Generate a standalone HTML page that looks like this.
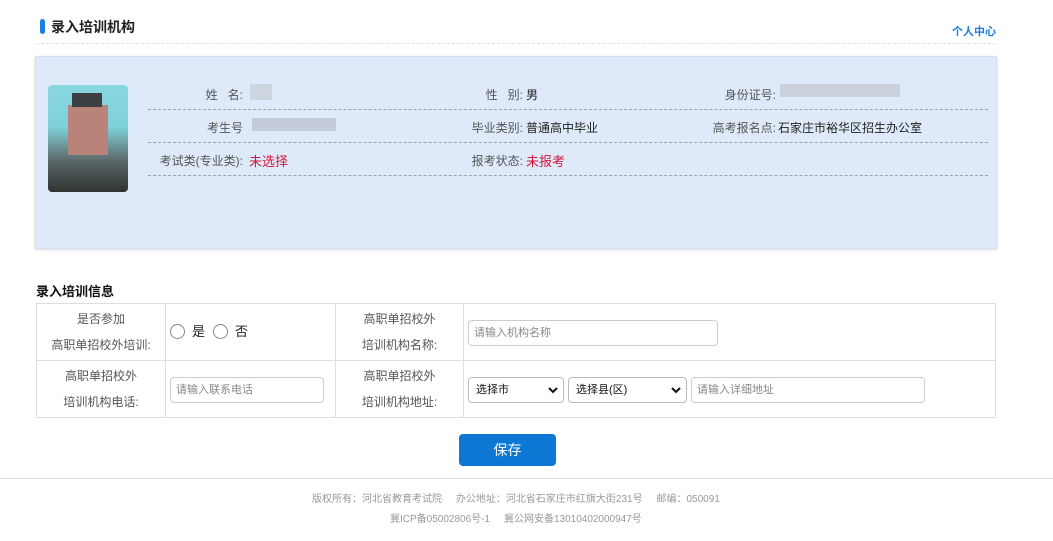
<!DOCTYPE html>
<html><head><meta charset="utf-8"><style>
*{margin:0;padding:0;box-sizing:border-box}
body{width:1053px;height:541px;background:#fff;font-family:"Liberation Sans","Noto Sans CJK SC",sans-serif;font-size:12px;color:#333;position:relative;overflow:hidden}
.a{position:absolute;white-space:nowrap}
.dash{position:absolute;left:148px;width:840px;border-top:1px dashed #9aa3ad}
.lab{color:#555;text-align:right}
.red{color:#d4163c}
.inp{position:absolute;border:1px solid #ccc;border-radius:4px;background:#fff;color:#888;font-size:11px;padding-left:5px;line-height:24px;height:26px;text-align:left}
.sel{position:absolute;border:1px solid #bbb;border-radius:4px;background:#fff;color:#111;font-size:11px;padding-left:7px;line-height:24px;height:26px;text-align:left}
.sel svg{position:absolute;right:5px;top:9px}
td{border:1px solid #ddd;color:#555;font-size:12px;text-align:center;line-height:26px;position:relative}
</style></head><body>
<div class="a" style="left:40px;top:19px;width:5px;height:15px;background:#1d7fe0;border-radius:3px"></div>
<div class="a" style="left:51px;top:17px;font-size:14px;font-weight:bold;color:#222">录入培训机构</div>
<div class="a" style="left:952px;top:23px;font-size:11px;color:#1d7fe0;font-weight:bold">个人中心</div>
<div class="a" style="left:36px;top:43px;width:960px;border-top:1px dashed #e3e3e3"></div>

<div class="a" style="left:35px;top:56px;width:962px;height:193px;background:#deeafa;border:1px solid #d2dff0;box-shadow:0 1px 3px rgba(0,0,0,.15)"></div>
<div class="a" style="left:48px;top:85px;width:80px;height:107px;border-radius:4px;background:linear-gradient(180deg,#8ad8e0 0%,#7ed0da 40%,#5d6a6a 70%,#2e3433 100%);overflow:hidden">
<div style="position:absolute;left:20px;top:20px;width:40px;height:50px;background:#b9837a"></div>
<div style="position:absolute;left:24px;top:8px;width:30px;height:14px;background:#3d4043"></div>
</div>
<div class="a" style="left:250px;top:84px;width:22px;height:16px;background:#c6ccd6;opacity:.7"></div>
<div class="a" style="left:252px;top:118px;width:84px;height:13px;background:#bcc4cf;opacity:.8"></div>
<div class="a" style="left:780px;top:84px;width:120px;height:13px;background:#c6ccd6;opacity:.8"></div>

<div class="a lab" style="left:150px;top:86px;width:93px">姓&nbsp;&nbsp;&nbsp;名:</div>
<div class="a lab" style="left:430px;top:86px;width:93px">性&nbsp;&nbsp;&nbsp;别:</div>
<div class="a" style="left:526px;top:86px;color:#222">男</div>
<div class="a lab" style="left:680px;top:86px;width:96px">身份证号:</div>
<div class="dash" style="top:109px"></div>
<div class="a lab" style="left:150px;top:119px;width:93px">考生号</div>
<div class="a lab" style="left:430px;top:119px;width:93px">毕业类别:</div>
<div class="a" style="left:526px;top:119px;color:#222">普通高中毕业</div>
<div class="a lab" style="left:680px;top:119px;width:96px">高考报名点:</div>
<div class="a" style="left:778px;top:119px;color:#222">石家庄市裕华区招生办公室</div>
<div class="dash" style="top:142px"></div>
<div class="a lab" style="left:140px;top:152px;width:103px">考试类(专业类):</div>
<div class="a red" style="left:249px;top:151px;font-size:13px">未选择</div>
<div class="a lab" style="left:430px;top:152px;width:93px">报考状态:</div>
<div class="a red" style="left:526px;top:151px;font-size:13px">未报考</div>
<div class="dash" style="top:175px"></div>

<div class="a" style="left:36px;top:281px;font-size:13px;font-weight:bold;color:#111">录入培训信息</div>
<table class="a" style="left:36px;top:303px;width:960px;border-collapse:collapse">
<tr style="height:57px"><td style="width:129px">是否参加<br>高职单招校外培训:</td>
<td style="width:170px;text-align:left;color:#222;font-size:13px"><span style="display:inline-block;width:15px;height:15px;border:1px solid #888;border-radius:50%;vertical-align:-3px;margin:0 7px 0 4px"></span>是<span style="display:inline-block;width:15px;height:15px;border:1px solid #888;border-radius:50%;vertical-align:-3px;margin:0 7px 0 8px"></span>否</td>
<td style="width:128px">高职单招校外<br>培训机构名称:</td>
<td><div class="inp" style="left:4px;top:16px;width:250px">请输入机构名称</div></td></tr>
<tr style="height:57px"><td>高职单招校外<br>培训机构电话:</td>
<td><div class="inp" style="left:4px;top:16px;width:154px">请输入联系电话</div></td>
<td>高职单招校外<br>培训机构地址:</td>
<td><div class="sel" style="left:4px;top:16px;width:96px">选择市<svg width="10" height="7" viewBox="0 0 10 7"><path d="M1 1l4 4 4-4" stroke="#111" stroke-width="2" fill="none"/></svg></div>
<div class="sel" style="left:104px;top:16px;width:119px">选择县(区)<svg width="10" height="7" viewBox="0 0 10 7"><path d="M1 1l4 4 4-4" stroke="#111" stroke-width="2" fill="none"/></svg></div>
<div class="inp" style="left:227px;top:16px;width:234px">请输入详细地址</div></td></tr>
</table>

<div class="a" style="left:459px;top:434px;width:97px;height:32px;background:#0d78d3;border-radius:4px;color:#fff;font-size:14px;text-align:center;line-height:32px">保存</div>
<div class="a" style="left:0;top:478px;width:1053px;border-top:1px solid #ddd"></div>
<div class="a" style="left:312px;top:490px;font-size:10px;color:#999">版权所有：河北省教育考试院&nbsp;&nbsp;&nbsp;&nbsp;&nbsp;办公地址：河北省石家庄市红旗大街231号&nbsp;&nbsp;&nbsp;&nbsp;&nbsp;邮编：050091</div>
<div class="a" style="left:390px;top:510px;font-size:10px;color:#999">冀ICP备05002806号-1&nbsp;&nbsp;&nbsp;&nbsp;&nbsp;冀公网安备13010402000947号</div>
</body></html>
